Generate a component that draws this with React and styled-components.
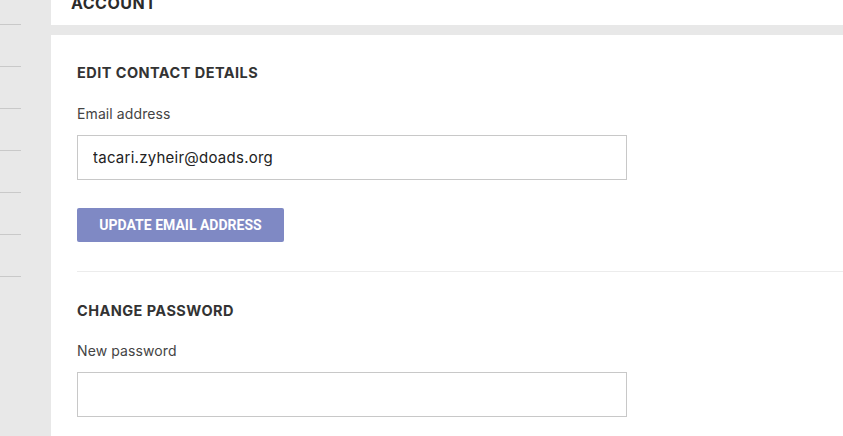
import React from 'react';
import styled, { createGlobalStyle } from 'styled-components';

const GlobalStyle = createGlobalStyle`
  html, body {
    margin: 0;
    padding: 0;
    background: #fff;
    font-family: Inter, "Noto Sans", sans-serif;
  }
`;

const Page = styled.div`
  display: flex;
  width: 843px;
  height: 436px;
  overflow: hidden;
`;

const Sidebar = styled.nav`
  width: 51px;
  flex: none;
  background: #e8e8e8;
  padding-top: 24px;
  display: flex;
  flex-direction: column;
  gap: 41px;
`;

const NavRule = styled.div`
  width: 21px;
  height: 1px;
  background: #c9c9c9;
`;

const Main = styled.main`
  flex: 1;
  display: flex;
  flex-direction: column;
  min-width: 0;
`;

const Header = styled.header`
  height: 25px;
  flex: none;
  overflow: hidden;
  padding-left: 20px;
  background: #fff;
`;

const Title = styled.h1`
  margin: -5px 0 0;
  font-size: 16px;
  line-height: 16px;
  font-weight: 700;
  letter-spacing: 0.5px;
  color: #2b2b2b;
`;

const Band = styled.div`
  height: 10px;
  flex: none;
  background: #e8e8e8;
`;

const Card = styled.section`
  flex: 1;
  background: #fff;
  padding: 29px 0 0 26px;
`;

const Section = styled.div`
  padding-bottom: ${p => (p.$last ? '0' : '29px')};
  border-bottom: ${p => (p.$last ? 'none' : '1px solid #ececec')};
  margin-bottom: 30px;
`;

const SectionTitle = styled.h2`
  margin: 0 0 ${p => (p.$tight ? '22px' : '23px')};
  font-size: 14.5px;
  line-height: 18px;
  font-weight: 700;
  letter-spacing: 0.45px;
  color: #333;
`;

const Label = styled.label`
  display: block;
  font-size: 14px;
  line-height: 18px;
  letter-spacing: 0.1px;
  color: #444;
  margin-bottom: 12px;
`;

const Input = styled.input`
  display: block;
  box-sizing: border-box;
  width: 550px;
  height: 45px;
  border: 1px solid #c8c8c8;
  border-radius: 0;
  padding: 0 15px;
  font-family: inherit;
  font-size: 15px;
  letter-spacing: 0.25px;
  color: #222;
  background: #fff;
  outline: none;
`;

const Button = styled.button`
  margin-top: 28px;
  width: 207px;
  height: 34px;
  border: none;
  border-radius: 2px;
  background: #7f89c4;
  color: #fff;
  font-family: Roboto, sans-serif;
  font-weight: 700;
  font-size: 14px;
  letter-spacing: 0;
  text-transform: uppercase;
  padding: 0;
`;

export default function App() {
  return (
    <>
      <GlobalStyle />
      <Page>
        <Sidebar>
          {[0, 1, 2, 3, 4, 5, 6].map(i => <NavRule key={i} />)}
        </Sidebar>
        <Main>
          <Header>
            <Title>ACCOUNT</Title>
          </Header>
          <Band />
          <Card>
            <Section>
              <SectionTitle>EDIT CONTACT DETAILS</SectionTitle>
              <Label>Email address</Label>
              <Input type="email" defaultValue="tacari.zyheir@doads.org" />
              <Button>Update email address</Button>
            </Section>
            <Section $last>
              <SectionTitle $tight>CHANGE PASSWORD</SectionTitle>
              <Label>New password</Label>
              <Input type="password" />
            </Section>
          </Card>
        </Main>
      </Page>
    </>
  );
}
